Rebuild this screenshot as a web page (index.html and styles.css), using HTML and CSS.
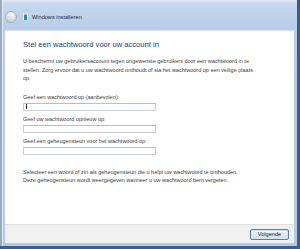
FILE: index.html
```html
<!DOCTYPE html>
<html lang="nl">
<head>
    <meta charset="UTF-8">
    <meta name="viewport" content="width=device-width, initial-scale=1.0">
    <title>Windows installeren</title>
    <link rel="stylesheet" href="styles.css">
</head>
<body>
    <div class="window">
        <div class="titlebar">
            <span class="back-btn">
                <svg width="12" height="12" viewBox="0 0 12 12">
                    <defs>
                        <radialGradient id="bg" cx="50%" cy="35%" r="60%">
                            <stop offset="0" stop-color="#ffffff"/>
                            <stop offset="1" stop-color="#c9ced6"/>
                        </radialGradient>
                    </defs>
                    <circle cx="6" cy="6" r="5.5" fill="url(#bg)" stroke="#9aa6b6" stroke-width="0.8"/>
                    <path d="M3.5 6 L6 3.8 M3.5 6 L6 8.2 M3.6 6 H8.5" stroke="#d7dce3" stroke-width="1" fill="none"/>
                </svg>
            </span>
            <span class="app-icon">
                <svg width="5" height="7" viewBox="0 0 5 7">
                    <rect x="0" y="0" width="5" height="7" fill="#e8f2ee"/>
                    <rect x="1" y="2" width="3" height="5" fill="#2f8f84"/>
                    <rect x="1.5" y="0.5" width="2" height="1.5" fill="#7fc2b6"/>
                </svg>
            </span>
            <span class="title">Windows installeren</span>
        </div>

        <div class="client">
            <div class="content">
                <h1>Stel een wachtwoord voor uw account in</h1>
                <p class="intro">U beschermt uw gebruikersaccount tegen ongewenste gebruikers door een wachtwoord in te<br>stellen. Zorg ervoor dat u uw wachtwoord onthoudt of sla het wachtwoord op een veilige plaats<br>op.</p>

                <div class="form-group first">
                    <label>Geef een wachtwoord op (aanbevolen):</label>
                    <div class="field"><span class="caret"></span></div>
                </div>
                <div class="form-group">
                    <label>Geef uw wachtwoord opnieuw op:</label>
                    <div class="field"></div>
                </div>
                <div class="form-group">
                    <label>Geef een geheugensteun voor het wachtwoord op:</label>
                    <div class="field"></div>
                </div>

                <p class="hint">Selecteer een woord of zin als geheugensteun die u helpt uw wachtwoord te onthouden.<br>Deze geheugensteun wordt weergegeven wanneer u uw wachtwoord bent vergeten.</p>
            </div>
            <div class="footer">
                <button type="button">Volgende</button>
            </div>
        </div>
    </div>
</body>
</html>
```

FILE: styles.css
```css
html, body {
    margin: 0;
    padding: 0;
}
body {
    font-family: "Liberation Sans", Arial, sans-serif;
    width: 300px;
    height: 249px;
    overflow: hidden;
}
.window {
    box-sizing: border-box;
    width: 300px;
    height: 249px;
    display: flex;
    flex-direction: column;
    padding: 0 3px 3px 5px;
    background: linear-gradient(#dfe7f1 0, #c7d8ee 4px, #b9cde9 28px, #b3c9e6 100%);
    border-right: 3px solid #3f5d88;
    border-bottom: 3px solid #3f5d88;
    box-shadow: inset 2px 0 0 #9aaac0, inset 3px 0 0 #e4ebf4;
}
.titlebar {
    height: 31px;
    display: flex;
    align-items: center;
    padding-top: 2px;
    box-sizing: border-box;
}
.back-btn {
    display: flex;
}
.app-icon {
    display: flex;
    margin-left: 6px;
}
.title {
    margin-left: 4px;
    font-size: 5.6px;
    color: #1b2a3c;
}
.client {
    flex: 1;
    display: flex;
    flex-direction: column;
    background: #fff;
    box-shadow: 0 -1px 0 #d8e3f1;
}
.content {
    flex: 1;
    padding: 9px 0 0 18px;
    color: #3c3c3c;
    font-size: 5.5px;
    line-height: 8.5px;
}
h1 {
    margin: 0;
    font-size: 7.6px;
    line-height: 10px;
    font-weight: normal;
    color: #223d74;
}
.intro {
    margin: 7px 0 0;
}
.form-group {
    margin-top: 4px;
}
.form-group.first {
    margin-top: 10px;
}
label {
    display: block;
    line-height: 8px;
    margin-bottom: 2px;
}
.field {
    box-sizing: border-box;
    width: 133px;
    height: 8px;
    border: 1px solid #c9cdd4;
    border-top-color: #b9bdc5;
    background: #fff;
    display: flex;
    align-items: center;
    padding-left: 2px;
}
.caret {
    width: 1px;
    height: 5px;
    background: #333;
}
.hint {
    margin: 13px 0 0;
}
.footer {
    height: 19px;
    box-sizing: border-box;
    background: #f0f0f0;
    border-top: 1px solid #e2e2e2;
    display: flex;
    justify-content: flex-end;
    align-items: center;
    padding-right: 5px;
}
button {
    width: 39px;
    height: 11px;
    padding: 0;
    font-family: "Liberation Sans", Arial, sans-serif;
    font-size: 5.6px;
    color: #1a1a1a;
    background: linear-gradient(#f4f8fb, #e1e9f0 50%, #d3dde6);
    border: 1px solid #5b7fa3;
    border-radius: 2px;
    box-shadow: inset 0 0 0 1px #cfe3f3;
}
```
